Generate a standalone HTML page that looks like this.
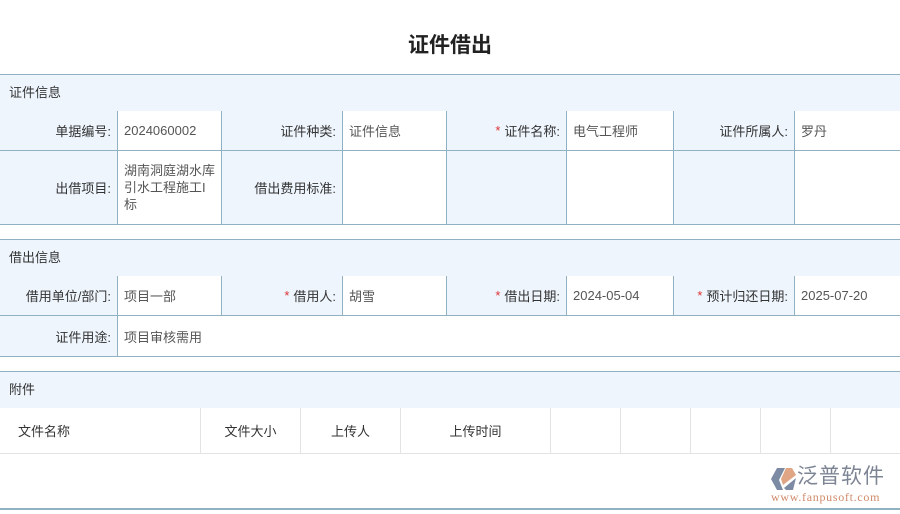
<!DOCTYPE html>
<html><head><meta charset="utf-8"><style>
*{margin:0;padding:0;box-sizing:border-box}
body{width:900px;height:514px;background:#fff;position:relative;overflow:hidden;font-family:"Liberation Sans","Noto Sans CJK SC",sans-serif;font-size:13px;color:#333}
.a{position:absolute}
.t{left:0;width:900px;top:29px;text-align:center;font-size:21px;font-weight:bold;color:#222}
.h{left:0;width:900px;background:#eef5fd;border-top:1px solid #8fb1c2;border-bottom:1px solid #8fb1c2;padding-left:9px;line-height:35px;color:#333}
.c{border-right:1px solid #8fb1c2;border-bottom:1px solid #8fb1c2;display:flex;align-items:center}
.l{background:#eef5fd;justify-content:flex-end;padding-right:6px}
.v{background:#fff;padding-left:6px;padding-right:4px;color:#555}
.s{color:#d33;margin-right:4px}
.g{border-right:1px solid #e3e3e3;border-bottom:1px solid #e3e3e3;display:flex;align-items:center;justify-content:center;background:#fff}
.e{border-right:none}
</style></head><body>
<div class="a t">证件借出</div>
<div class="a h" style="top:74px;height:38px">证件信息</div>
<div class="a c l" style="left:0;top:111px;width:118px;height:40px">单据编号:</div>
<div class="a c v" style="left:118px;top:111px;width:104px;height:40px">2024060002</div>
<div class="a c l" style="left:222px;top:111px;width:121px;height:40px">证件种类:</div>
<div class="a c v" style="left:343px;top:111px;width:104px;height:40px">证件信息</div>
<div class="a c l" style="left:447px;top:111px;width:120px;height:40px"><span class="s">*</span>证件名称:</div>
<div class="a c v" style="left:567px;top:111px;width:107px;height:40px">电气工程师</div>
<div class="a c l" style="left:674px;top:111px;width:121px;height:40px">证件所属人:</div>
<div class="a c v e" style="left:795px;top:111px;width:105px;height:40px">罗丹</div>
<div class="a c l" style="left:0;top:151px;width:118px;height:74px">出借项目:</div>
<div class="a c v" style="left:118px;top:151px;width:104px;height:74px;line-height:17px;padding-right:3px">湖南洞庭湖水库引水工程施工I标</div>
<div class="a c l" style="left:222px;top:151px;width:121px;height:74px">借出费用标准:</div>
<div class="a c v" style="left:343px;top:151px;width:104px;height:74px"></div>
<div class="a c l" style="left:447px;top:151px;width:120px;height:74px"></div>
<div class="a c v" style="left:567px;top:151px;width:107px;height:74px"></div>
<div class="a c l" style="left:674px;top:151px;width:121px;height:74px"></div>
<div class="a c v e" style="left:795px;top:151px;width:105px;height:74px"></div>

<div class="a h" style="top:239px;height:38px">借出信息</div>
<div class="a c l" style="left:0;top:276px;width:118px;height:40px">借用单位/部门:</div>
<div class="a c v" style="left:118px;top:276px;width:104px;height:40px">项目一部</div>
<div class="a c l" style="left:222px;top:276px;width:121px;height:40px"><span class="s">*</span>借用人:</div>
<div class="a c v" style="left:343px;top:276px;width:104px;height:40px">胡雪</div>
<div class="a c l" style="left:447px;top:276px;width:120px;height:40px"><span class="s">*</span>借出日期:</div>
<div class="a c v" style="left:567px;top:276px;width:107px;height:40px">2024-05-04</div>
<div class="a c l" style="left:674px;top:276px;width:121px;height:40px"><span class="s">*</span>预计归还日期:</div>
<div class="a c v e" style="left:795px;top:276px;width:105px;height:40px">2025-07-20</div>
<div class="a c l" style="left:0;top:316px;width:118px;height:41px">证件用途:</div>
<div class="a c v e" style="left:118px;top:316px;width:782px;height:41px">项目审核需用</div>

<div class="a h" style="top:371px;height:38px">附件</div>
<div class="a g" style="left:0;top:408px;width:201px;height:46px;justify-content:flex-start;padding-left:18px">文件名称</div>
<div class="a g" style="left:201px;top:408px;width:100px;height:46px">文件大小</div>
<div class="a g" style="left:301px;top:408px;width:100px;height:46px">上传人</div>
<div class="a g" style="left:401px;top:408px;width:150px;height:46px">上传时间</div>
<div class="a g" style="left:551px;top:408px;width:70px;height:46px"></div>
<div class="a g" style="left:621px;top:408px;width:70px;height:46px"></div>
<div class="a g" style="left:691px;top:408px;width:70px;height:46px"></div>
<div class="a g" style="left:761px;top:408px;width:70px;height:46px"></div>
<div class="a g" style="left:831px;top:408px;width:69px;height:46px;border-right:none"></div>

<svg class="a" style="left:769px;top:466px" width="30" height="28" viewBox="0 0 30 28">
<path d="M8 2 L16 2 L10 14 L14 24 L8 24 L2 13 Z" fill="#7d8aa3"/>
<path d="M17 2 L23 2 L27 9 L14 19 L12 13 Z" fill="#e0a585"/>
<path d="M15 22 L27 12 L24 24 L17 24 Z" fill="#7d8aa3"/>
</svg>
<div class="a" style="left:797px;top:464px;font-size:21px;color:#7d8494;letter-spacing:1px;line-height:26px">泛普软件</div>
<div class="a" style="left:771px;top:490px;font-size:12px;color:#d08a6a;font-family:'Liberation Serif',serif;letter-spacing:0.7px">www.fanpusoft.com</div>
<div class="a" style="left:0;top:508px;width:900px;height:2px;background:#8fb1c2"></div>
</body></html>
